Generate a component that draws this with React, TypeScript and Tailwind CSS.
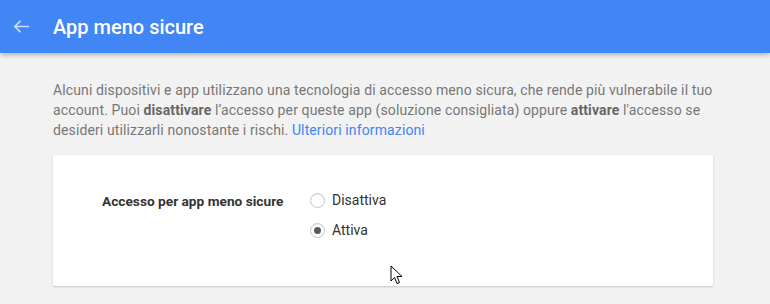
const OPTIONS = [
  { label: 'Disattiva', checked: false },
  { label: 'Attiva', checked: true },
]

function Radio({ checked }: { checked: boolean }) {
  return (
    <span className="flex h-[15px] w-[15px] items-center justify-center rounded-full border border-[#c6c6c6] bg-white shadow-[inset_0_1px_1px_rgba(0,0,0,0.08)]">
      {checked && <span className="h-[7px] w-[7px] rounded-full bg-[#5a5a5a]" />}
    </span>
  )
}

export default function App() {
  return (
    <div className="relative h-[304px] w-[770px] overflow-hidden bg-[#f2f2f2] font-['Roboto',sans-serif]">
      {/* Header */}
      <header className="relative z-10 flex h-[53px] items-center bg-[#4285f4] shadow-[0_2px_5px_rgba(0,0,0,0.26)]">
        <svg className="ml-[13px]" width="16" height="13" viewBox="0 0 16 13" fill="none">
          <path d="M16 6.5H1.5M7.5 0.8L1.8 6.5 7.5 12.2" stroke="rgba(255,255,255,0.72)" strokeWidth="1.7" />
        </svg>
        <h1 className="ml-[24px] text-[20px] font-medium leading-none text-white">App meno sicure</h1>
      </header>

      {/* Body */}
      <main className="ml-[53px] w-[666px] pt-[27px]">
        <p className="text-[14px] leading-[20px] tracking-[0.12px] text-[#777]">
          Alcuni dispositivi e app utilizzano una tecnologia di accesso meno sicura, che rende più vulnerabile il tuo
          account. Puoi <b className="font-bold text-[#666]">disattivare</b> l’accesso per queste app (soluzione consigliata) oppure{' '}
          <b className="font-bold text-[#666]">attivare</b> l'accesso se desideri utilizzarli nonostante i rischi.{' '}
          <a className="text-[#4285f4]">Ulteriori informazioni</a>
        </p>

        <section className="mt-[15px] h-[131px] w-[660px] rounded-[2px] bg-white pl-[49px] pt-[36px] shadow-[0_1px_2px_rgba(0,0,0,0.18)]">
          <div className="flex">
            <div className="w-[208px] pt-[1px] text-[13.7px] font-bold leading-[18px] text-[#333]">
              Accesso per app meno sicure
            </div>
            <div className="flex flex-col gap-[12px]">
              {OPTIONS.map((o) => (
                <label key={o.label} className="flex items-center gap-[7px] text-[14px] leading-[18px] text-[#333]">
                  <Radio checked={o.checked} />
                  {o.label}
                </label>
              ))}
            </div>
          </div>
        </section>
      </main>

      {/* Mouse pointer */}
      <svg className="absolute left-[390px] top-[265px]" width="13" height="21" viewBox="0 0 13 21">
        <path d="M1 1v15l3.5-3.5 2.5 6 2.5-1-2.5-6H12z" fill="white" stroke="black" strokeWidth="1" strokeLinejoin="round" />
      </svg>
    </div>
  )
}
